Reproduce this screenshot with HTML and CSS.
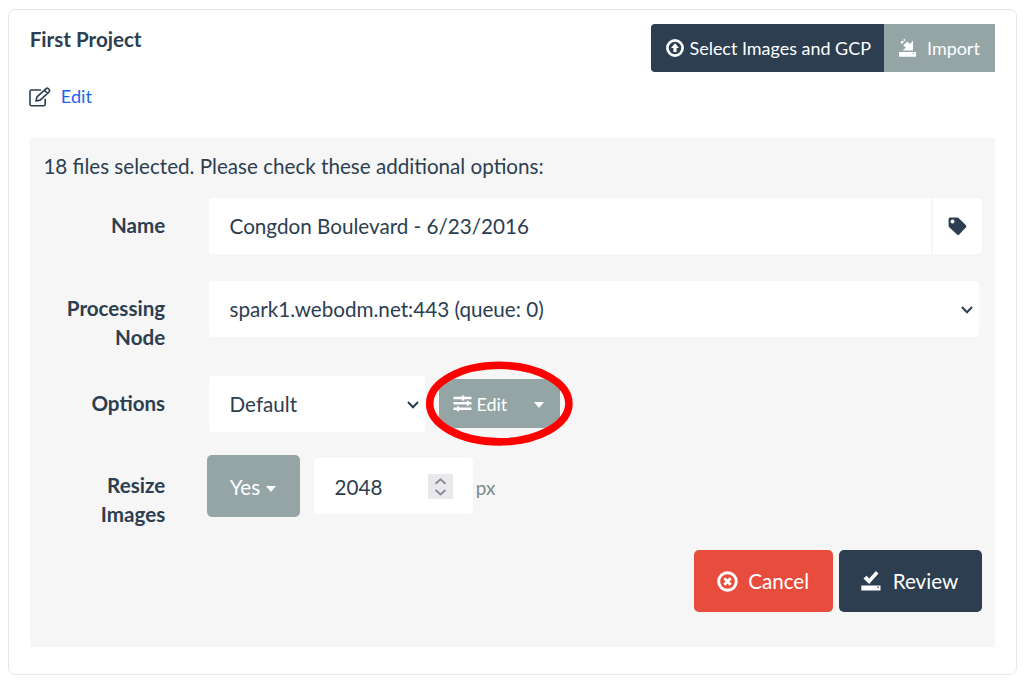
FILE: index.html
```html
<!DOCTYPE html>
<html lang="en">
<head>
<meta charset="utf-8">
<title>First Project</title>
<link rel="stylesheet" href="styles.css">
</head>
<body>
<main class="card">
  <header class="head">
    <h1 class="title">First Project</h1>
    <div class="group">
      <button class="btn dark select"><svg class="i-up" width="18" height="18" viewBox="0 0 18 18"><circle cx="9" cy="9" r="7.6" fill="none" stroke="#fff" stroke-width="2.7"/><path d="M9 4.3l4 4.7h-2.4v4H7.4V9H5z" fill="#fff"/></svg><span>Select Images and GCP</span></button>
      <button class="btn gray import"><svg class="i-imp" width="17" height="18" viewBox="0 0 17 18" fill="#fff"><path d="M0 13h17v4.7H0zM14 1.6v9.9H3.8l3-2.9-2.5-2.4 3.8-3.6 3 2.4zM1.4 3.4l2-2 1.6 1.3-2.2 2.2zM4.2.8L5.5 0l1.2 1-1.2 1.2z"/><path d="M13.6 14.3h1.6v.8h-1.6z" fill="#95a5a6"/></svg><span>Import</span></button>
    </div>
  </header>
  <div class="editrow"><svg width="22" height="20" viewBox="0 0 22 20" fill="none" stroke="#2c3e50" stroke-width="1.6" stroke-linejoin="round"><path d="M12 3H2.5Q1 3 1 4.5v12.7Q1 18.7 2.5 18.7h12.2q1.5 0 1.5-1.5v-5.4"/><path d="M7 14l1-4.2 9.1-8.2q1.1-.9 2.2.1l.9 1q.9 1.1-.1 2.1l-8.9 8.3zM15.5 3.2l3.1 3.3"/></svg><a class="link">Edit</a></div>
  <section class="panel">
    <p class="intro">18 files selected. Please check these additional options:</p>
    <div class="row name">
      <label class="label">Name</label>
      <div class="field wide"><span>Congdon Boulevard - 6/23/2016</span></div>
      <button class="tag"><svg width="19" height="19" viewBox="0 0 19 19"><path fill="#2c3e50" fill-rule="evenodd" d="M.6 2Q.6.5 2 .5h7.2q.8 0 1.4.6l7.4 7.2q.9 1 0 1.9L11.2 17.6q-1.1 1-2.1 0L1.2 10.2q-.6-.6-.6-1.4zM4.5 2.5a2 2 0 1 0 0 4 2 2 0 0 0 0-4z"/></svg></button>
    </div>
    <div class="row node">
      <label class="label">Processing<br>Node</label>
      <div class="field full"><span>spark1.webodm.net:443 (queue: 0)</span><svg class="chev" width="12" height="8" viewBox="0 0 12 8"><path d="M1 1l5 5.3L11 1"/></svg></div>
    </div>
    <div class="row options">
      <label class="label">Options</label>
      <div class="field preset"><span>Default</span><svg class="chev" width="12" height="8" viewBox="0 0 12 8"><path d="M1 1l5 5.3L11 1"/></svg></div>
      <div class="callout">
        <button class="btn gray edit"><svg width="19" height="17" viewBox="0 0 19 17" fill="#fff"><path d="M.5 1.8h18v2.4H.5zM.5 7.1h18v2.4H.5zM.5 12.5h18v2.4H.5zM9 .5h2.2v5H9zM13.6 5.8h2.2v5h-2.2zM4 11.2h2.2v5H4z"/></svg><span>Edit</span><i class="caret"></i></button>
        <svg class="ring" width="148" height="86" viewBox="0 0 148 86"><ellipse cx="74.3" cy="42.6" rx="69.6" ry="38.3" fill="none" stroke="#f00" stroke-width="7.6"/></svg>
      </div>
    </div>
    <div class="row resize">
      <label class="label">Resize<br>Images</label>
      <button class="btn gray yes"><span>Yes</span><i class="caret"></i></button>
      <div class="field num"><span>2048</span><span class="spin"><svg width="25" height="25" viewBox="0 0 25 25" fill="none" stroke="#8a8a96" stroke-width="1.9"><path d="M7.5 9.7l5-4.5 5 4.5M7.5 16l5 4.5 5-4.5"/></svg></span></div>
      <span class="px">px</span>
    </div>
    <footer class="actions">
      <button class="btn red cancel"><svg width="21" height="21" viewBox="0 0 21 21" fill="none" stroke="#fff"><circle cx="10.5" cy="10.5" r="8.8" stroke-width="3"/><path d="M7.3 7.3l6.4 6.4M13.7 7.3l-6.4 6.4" stroke-width="2.9"/></svg><span>Cancel</span></button>
      <button class="btn dark review"><svg width="20" height="20" viewBox="0 0 20 20" fill="#fff"><path d="M.3 14.4h19.2v5.2H.3zM2.5 7.5l2.9-2.7 2.8 2.7L14.9.1l2.6 2.3L8.1 13z"/><path d="M16 15.8h2l-1 1.6z" fill="#2c3e50"/></svg><span>Review</span></button>
    </footer>
  </section>
</main>
</body>
</html>
```
FILE: styles.css
```css
* { box-sizing: border-box; }
body { margin: 0; background: #fff; color: #2c3e50; font: 20.65px/29.5px Lato, sans-serif; }
svg { display: block; flex: none; }
button { font: inherit; margin: 0; border: 0; padding: 0; }
.card { margin: 9px 7px 0 8px; height: 666px; border: 1px solid #e6e6e6; border-radius: 7px; padding: 14px 20.6px 0 20.6px; }
.head { display: flex; justify-content: space-between; height: 49px; }
.title { margin: 1px 0 0 .1px; font-size: 20.6px; line-height: 28px; font-weight: 700; }
.group { display: flex; }
.btn { display: flex; align-items: center; color: #fff; white-space: nowrap; }
.dark { background: #2c3e50; }
.gray { background: #95a5a6; }
.red { background: #e74c3c; }
.select { width: 233px; height: 48.4px; padding-left: 14.6px; gap: 5.5px; border-radius: 4px 0 0 4px; font-size: 17.95px; }
.import { width: 111px; height: 48.4px; padding-left: 14.6px; gap: 11px; font-size: 17.95px; }
.group span, .edit span { padding-top: 1.5px; }
.editrow { display: flex; align-items: center; gap: 10px; height: 28px; margin: 10px 0 0 -.8px; font-size: 18.2px; }
.link { color: #1a66f0; }
.panel { margin-top: 26.5px; height: 509px; background: #f6f6f6; padding: 15px 13.4px 0 14.4px; }
.intro { margin: -.1px 0 0 -.6px; height: 29px; font-size: 20.63px; }
.row { display: flex; }
.label { width: 122px; margin: 0 43.7px 0 -.8px; text-align: right; font-weight: 700; font-size: 20.6px; line-height: 29.6px; padding-top: 12.6px; }
.field { display: flex; align-items: center; justify-content: space-between; height: 56px; padding-left: 20.7px; background: #fff; border-radius: 3px; white-space: nowrap; }
.field > span:first-child { padding-top: 1px; }
.name { margin-top: 16.9px; height: 83px; }
.wide { flex: 1; border-radius: 3px 0 0 3px; }
.tag { display: flex; align-items: center; justify-content: center; width: 49px; height: 56px; margin-left: 2px; background: #fff; border-radius: 0 4px 4px 0; }
.node { height: 95px; }
.full { width: 770px; padding-right: 6px; }
.chev { fill: none; stroke: #2c3e50; stroke-width: 2; margin-top: 1px; }
.options { height: 82px; }
.preset { width: 216px; padding-right: 6px; }
.callout { position: relative; margin: 3px 0 0 14px; }
.ring { position: absolute; left: -14px; top: -18px; }
.edit { width: 121px; height: 49px; padding-left: 14px; gap: 4.5px; border-radius: 3px; font-size: 18px; }
.caret { border: 5.5px solid transparent; border-top: 6px solid #fff; border-bottom: 0; }
.edit .caret { margin: 3px 0 0 22.5px; }
.resize { height: 92px; }
.yes { width: 93px; height: 62px; margin: -3px 14px 0 -2px; padding-left: 22.8px; gap: 6px; border-radius: 5px; padding-top: 2.6px; }
.yes .caret { margin-top: 2px; }
.num { width: 159px; padding-right: 20px; }
.num > span:first-child { padding-top: 2px; }
.spin { background: #e9e9ed; }
.px { margin: 15px 0 0 2.8px; color: #7b8a8b; font-size: 18.9px; }
.actions { display: flex; justify-content: flex-end; gap: 6px; }
.cancel, .review { height: 62px; border-radius: 5px; }
.cancel { width: 139px; padding-left: 23px; gap: 10.5px; }
.review { width: 143.4px; padding-left: 22.5px; gap: 11.5px; }
.cancel span, .review span { padding-top: 1px; }
```
